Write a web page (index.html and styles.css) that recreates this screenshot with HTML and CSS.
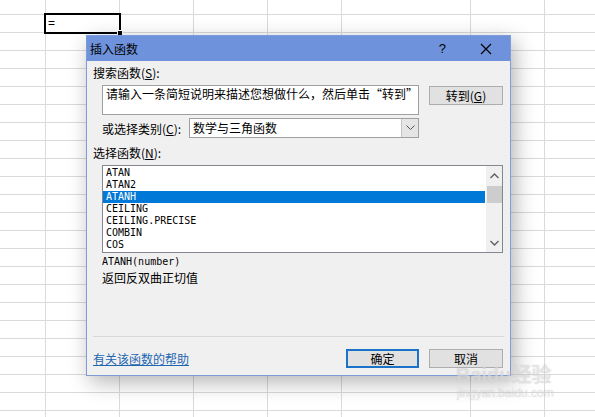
FILE: index.html
```html
<!DOCTYPE html>
<html lang="zh-CN">
<head>
  <meta charset="UTF-8" />
  <title>插入函数</title>
  <link rel="stylesheet" href="styles.css">
</head>
<body>
  <div class="sheet">
    <div class="grid">
      <div class="col col-a"></div>
      <div class="col"></div>
      <div class="col"></div>
      <div class="col"></div>
      <div class="col"></div>
      <div class="col col-wide"></div>
      <div class="col"></div>
      <div class="col col-rest"></div>
    </div>
    <div class="vscroll">
      <div class="vthumb">
        <svg width="8" height="7" viewBox="0 0 8 7"><path d="M0 0.5 H8 M0 3.5 H8 M0 6.5 H8" stroke="#777" fill="none"/></svg>
      </div>
    </div>
  </div>

  <div class="active-cell">=<span class="fill-handle"></span></div>

  <div class="dialog">
    <div class="titlebar">
      <span class="title">插入函数</span>
      <span class="help">?</span>
      <svg class="close" width="12" height="12" viewBox="0 0 12 12">
        <path d="M1 1 L11 11 M11 1 L1 11" stroke="#000" stroke-width="1.2" fill="none"/>
      </svg>
    </div>
    <div class="body">
      <div class="label">搜索函数(<u>S</u>):</div>
      <div class="search-row">
        <div class="search-box">请输入一条简短说明来描述您想做什么，然后单击“转到”</div>
        <button class="btn go">转到(<u>G</u>)</button>
      </div>
      <div class="cat-row">
        <span class="cat-label">或选择类别(<u>C</u>):</span>
        <div class="select">
          <span class="select-value">数学与三角函数</span>
          <span class="select-arrow">
            <svg width="9" height="6" viewBox="0 0 9 6"><path d="M0.5 0.5 L4.5 4.5 L8.5 0.5" stroke="#555" fill="none"/></svg>
          </span>
        </div>
      </div>
      <div class="label fn-label">选择函数(<u>N</u>):</div>
      <div class="listbox">
        <ul class="items">
          <li>ATAN</li>
          <li>ATAN2</li>
          <li class="selected">ATANH</li>
          <li>CEILING</li>
          <li>CEILING.PRECISE</li>
          <li>COMBIN</li>
          <li>COS</li>
        </ul>
        <div class="list-scroll">
          <svg width="9" height="6" viewBox="0 0 9 6"><path d="M0.5 5 L4.5 1 L8.5 5" stroke="#606060" stroke-width="1.4" fill="none"/></svg>
          <div class="list-thumb"></div>
          <div class="spacer"></div>
          <svg width="9" height="6" viewBox="0 0 9 6"><path d="M0.5 1 L4.5 5 L8.5 1" stroke="#606060" stroke-width="1.4" fill="none"/></svg>
        </div>
      </div>
      <div class="syntax">ATANH(number)</div>
      <div class="desc">返回反双曲正切值</div>
      <div class="separator"></div>
      <div class="footer">
        <a class="help-link" href="#">有关该函数的帮助</a>
        <button class="btn ok">确定</button>
        <button class="btn cancel">取消</button>
      </div>
    </div>
  </div>

  <div class="watermark">
    <div class="wm-big">Baidu经验</div>
    <div class="wm-small">jingyan.baidu.com</div>
  </div>
</body>
</html>
```

FILE: styles.css
```css
* {
  margin: 0;
  padding: 0;
  box-sizing: border-box;
}

body {
  width: 595px;
  height: 417px;
  overflow: hidden;
  position: relative;
  background: #fff;
  font-family: "Noto Sans CJK SC", "Liberation Sans", sans-serif;
  font-size: 12px;
  color: #000;
}

/* spreadsheet behind the dialog */
.sheet {
  display: flex;
  height: 417px;
}

.grid {
  flex: 1;
  display: flex;
  background: repeating-linear-gradient(to bottom, transparent 0 14px, #dadada 14px 15px, transparent 15px 18px);
}

.col {
  width: 74px;
  border-right: 1px solid #dadada;
}

.col-a {
  width: 46px;
}

.col-wide {
  width: 129px;
}

.col-rest {
  flex: 1;
  border-right: none;
}

.vscroll {
  width: 17px;
  flex-shrink: 0;
  background: #dcdde0;
  border-right: 2px solid #5a5a5a;
  padding-top: 162px;
}

.vthumb {
  height: 255px;
  border: 1px solid #8c8c8c;
  border-right: none;
  border-bottom: none;
  background: linear-gradient(to right, #f4f4f6, #e4e5e8);
  display: flex;
  justify-content: center;
  align-items: flex-start;
  padding-top: 197px;
}

.active-cell {
  position: absolute;
  left: 44px;
  top: 13px;
  width: 77px;
  height: 21px;
  border: 2px solid #000;
  padding-left: 2px;
  font-family: "Liberation Sans", sans-serif;
  font-size: 12px;
  line-height: 17px;
}

.fill-handle {
  position: absolute;
  right: -4px;
  bottom: -4px;
  width: 6px;
  height: 6px;
  background: #000;
  border: 1px solid #fff;
}

/* insert function dialog */
.dialog {
  position: absolute;
  left: 86px;
  top: 35px;
  width: 425px;
  height: 341px;
  border: 1px solid #7d9cd8;
  background: #f0f0f0;
  box-shadow: 4px 6px 20px rgba(0, 0, 0, 0.3);
  display: flex;
  flex-direction: column;
}

.titlebar {
  height: 25px;
  background: #6e93dc;
  display: flex;
  align-items: center;
  padding-left: 3px;
}

.title {
  flex: 1;
}

.help {
  font-family: "Liberation Sans", sans-serif;
  font-size: 13px;
  margin-right: 34px;
}

.close {
  margin-right: 18px;
}

.body {
  flex: 1;
  display: flex;
  flex-direction: column;
  padding: 4px 6px 7px 6px;
}

.label {
  line-height: 16px;
}

u {
  text-decoration: underline;
  text-underline-offset: 1px;
}

.search-row {
  display: flex;
  align-items: flex-start;
  margin-top: 4px;
  padding-left: 9px;
}

.search-box {
  width: 317px;
  height: 30px;
  background: #fff;
  border: 1px solid #a0a0a0;
  padding: 0 3px;
  line-height: 15px;
  white-space: nowrap;
  overflow: hidden;
}

.btn {
  width: 74px;
  height: 19px;
  background: #e1e1e1;
  border: 1px solid #adadad;
  font-family: inherit;
  font-size: 12px;
  line-height: 15px;
  color: #000;
}

.go {
  margin-top: 1px;
  margin-left: 10px;
}

.cat-row {
  display: flex;
  align-items: center;
  margin-top: 3px;
  padding-left: 9px;
  height: 20px;
}

.cat-label {
  width: 87px;
}

.select {
  width: 230px;
  height: 20px;
  background: #fff;
  border: 1px solid #a0a0a0;
  display: flex;
}

.select-value {
  flex: 1;
  padding-left: 3px;
  line-height: 17px;
}

.select-arrow {
  width: 17px;
  background: #e5e5e5;
  border-left: 1px solid #c4c4c4;
  display: flex;
  align-items: center;
  justify-content: center;
}

.fn-label {
  margin-top: 7px;
}

.listbox {
  margin-top: 4px;
  margin-left: 9px;
  width: 401px;
  height: 88px;
  background: #fff;
  border: 1px solid #828790;
  display: flex;
}

.items {
  list-style: none;
  flex: 1;
  padding-top: 1px;
  font-family: "DejaVu Sans Mono", monospace;
  font-size: 10px;
}

.items li {
  height: 12px;
  line-height: 12px;
  padding-left: 3px;
}

.items .selected {
  background: #0078d7;
  color: #fff;
  margin-right: 1px;
}

.list-scroll {
  width: 16px;
  background: #f0f0f0;
  display: flex;
  flex-direction: column;
  align-items: center;
  padding: 7px 0 6px 0;
}

.list-thumb {
  width: 15px;
  height: 17px;
  margin-top: 7px;
  background: #cdcdcd;
}

.spacer {
  flex: 1;
}

.syntax {
  margin-top: 2px;
  padding-left: 9px;
  font-family: "DejaVu Sans Mono", monospace;
  font-size: 10px;
  line-height: 14px;
}

.desc {
  margin-top: 1px;
  padding-left: 9px;
  line-height: 16px;
}

.separator {
  margin-top: auto;
  height: 1px;
  background: #d9d9d9;
}

.footer {
  display: flex;
  align-items: center;
  margin-top: 12px;
}

.help-link {
  flex: 1;
  color: #1e67b0;
  text-decoration: underline;
}

.ok {
  width: 73px;
  border: 2px solid #1a73c9;
  line-height: 13px;
}

.cancel {
  margin-left: 10px;
  margin-right: 1px;
}

/* faint watermark laid over the bottom right corner */
.watermark {
  position: absolute;
  left: 456px;
  top: 364px;
  color: rgba(255, 255, 255, 0.45);
  text-shadow: 0 0 1px rgba(140, 140, 140, 0.45);
  font-family: "Liberation Sans", "Noto Sans CJK SC", sans-serif;
}

.wm-big {
  font-size: 20px;
  font-weight: bold;
  line-height: 22px;
}

.wm-small {
  font-size: 12px;
  line-height: 14px;
  padding-left: 1px;
}
```
